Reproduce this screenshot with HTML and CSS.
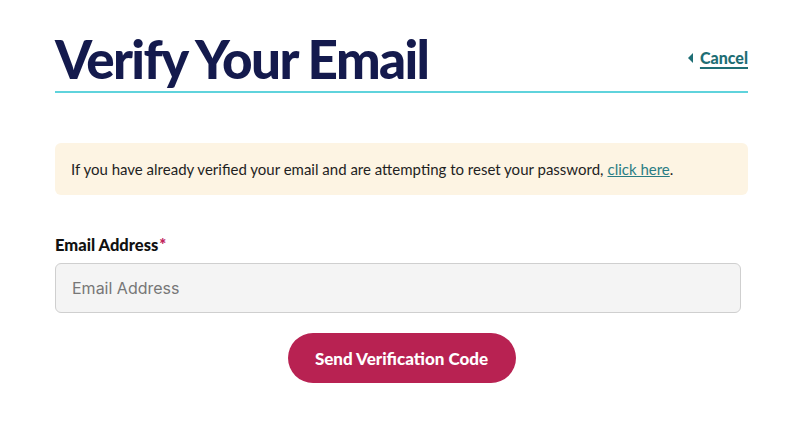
FILE: index.html
```html
<!DOCTYPE html>
<html>
<head>
<meta charset="utf-8">
<link rel="stylesheet" href="styles.css">
</head>
<body>
<main class="page">
  <header class="head">
    <h1 class="title">Verify Your Email</h1>
    <a class="cancel" href="#"><span class="tri"></span><span class="cancel-text">Cancel</span></a>
  </header>
  <div class="notice">If you have already verified your email and are attempting to reset your password, <a href="#" class="link">click here</a>.</div>
  <form class="form">
    <label class="label" for="email">Email Address<span class="req">*</span></label>
    <input class="input" id="email" type="text" placeholder="Email Address">
    <div class="actions">
      <button class="btn" type="button">Send Verification Code</button>
    </div>
  </form>
</main>
</body>
</html>
```
FILE: styles.css
```css
* { box-sizing: border-box; }
html, body { margin: 0; padding: 0; background: #fff; }
body { font-family: "Lato", "Liberation Sans", sans-serif; color: #1a1a1a; }
.page { width: 693px; margin-left: 55px; padding-top: 28px; }
.head {
  display: flex; justify-content: space-between; align-items: center;
  border-bottom: 2px solid #5fd3dc; height: 65px;
}
.title {
  margin: 0; font-family: "Lato", sans-serif; font-weight: 900;
  font-size: 53px; letter-spacing: -1.65px; color: #141a4d; line-height: 1;
  margin-top: -2px;
}
.cancel { display: flex; align-items: center; gap: 7px; color: #1e6e75; text-decoration: none; margin-top: -4px; }
.tri { width: 0; height: 0; border-top: 5px solid transparent; border-bottom: 5px solid transparent; border-right: 5px solid #1e6e75; }
.cancel-text { font-family: "Lato", sans-serif; font-weight: 900; font-size: 16px; text-decoration: underline; text-decoration-thickness: 2px; text-underline-offset: 3px; }
.notice {
  margin-top: 50px; background: #fdf4e3; border-radius: 6px;
  height: 52px; padding: 0 16px; display: flex; align-items: center;
  font-size: 15px; color: #1f1f1f;
}
.link { color: #2a7d84; text-decoration: underline; margin-left: 4px; }
.form { margin-top: 40px; }
.label { display: block; font-weight: 900; font-size: 16.5px; color: #111; }
.req { color: #c0245a; margin-left: 1px; }
.input {
  display: block; width: 686px; height: 50px; margin-top: 8px;
  background: #f4f4f4; border: 1px solid #cfcfcf; border-radius: 6px;
  padding: 0 16px; font-family: "Inter", sans-serif; font-size: 16px; color: #333;
}
.input::placeholder { color: #777; }
.actions { display: flex; justify-content: center; margin-top: 20px; }
.btn {
  width: 228px; height: 50px; border: none; border-radius: 25px;
  background: #b82252; color: #fff; font-family: "Lato", sans-serif;
  font-weight: 900; font-size: 17px;
}
```
